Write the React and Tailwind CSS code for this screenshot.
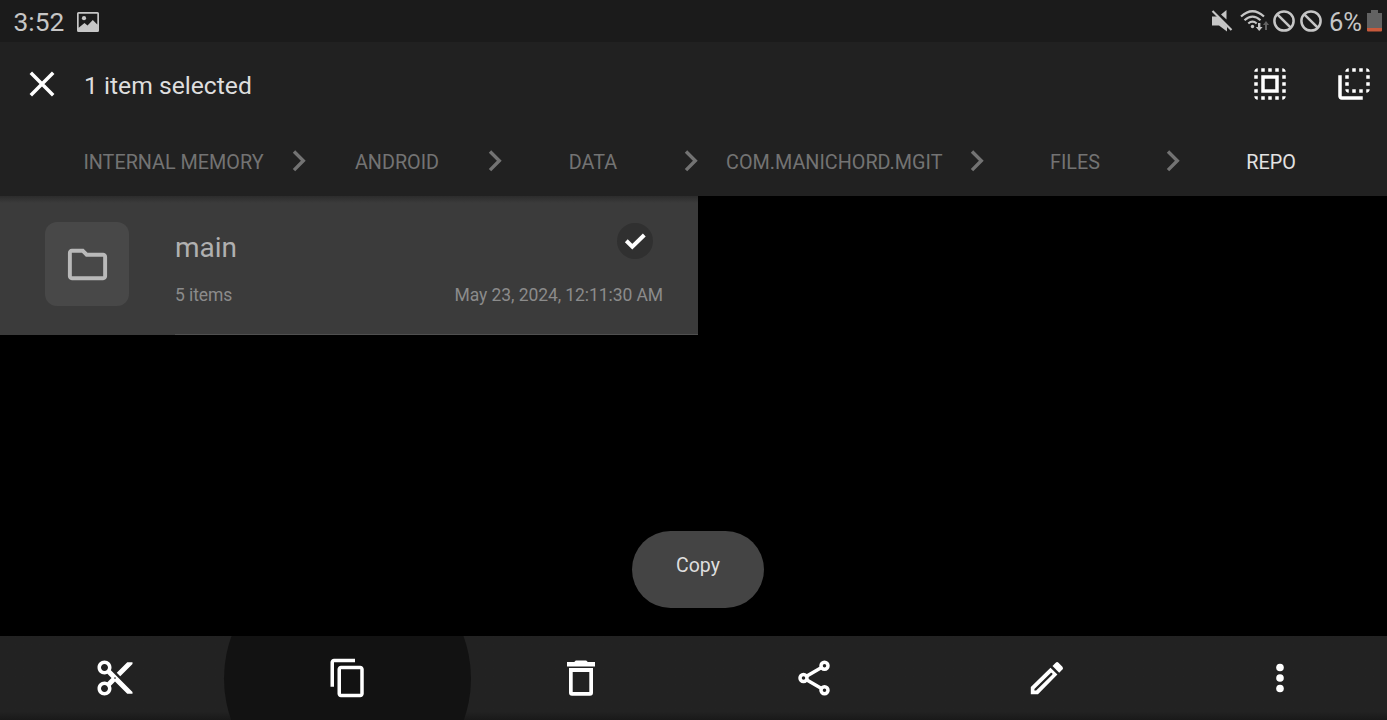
const F = "font-['Roboto',sans-serif]";

function Icon({ className = 'size-[42px]', children, viewBox = '0 0 24 24' }) {
  return (
    <svg viewBox={viewBox} fill="currentColor" className={`block shrink-0 ${className}`}>
      {children}
    </svg>
  );
}

const SelectAll = () => (
  <Icon>
    <path d="M3 5h2V3c-1.100 0-2 .9-2 2zm0 8h2v-2H3v2zm4 8h2v-2H7v2zM3 9h2V7H3v2zm10-6h-2v2h2V3zm6 0v2h2c0-1.100-.9-2-2-2zM5 21v-2H3c0 1.100.9 2 2 2zm-2-4h2v-2H3v2zM9 3H7v2h2V3zm2 18h2v-2h-2v2zm8-8h2v-2h-2v2zm0 8c1.100 0 2-.9 2-2h-2v2zm0-12h2V7h-2v2zm0 8h2v-2h-2v2zm-4 4h2v-2h-2v2zm0-16h2V3h-2v2zM7 17h10V7H7v10zm2-8h6v6H9V9z" />
  </Icon>
);

const FlipBack = () => (
  <Icon>
    <path d="M9 7H7v2h2V7zm0 4H7v2h2v-2zm0-8c-1.110 0-2 .9-2 2h2V3zm4 12h-2v2h2v-2zm6-12v2h2c0-1.100-.9-2-2-2zm-6 0h-2v2h2V3zM9 17v-2H7c0 1.100.89 2 2 2zm10-4h2v-2h-2v2zm0-4h2V7h-2v2zm0 8c1.100 0 2-.9 2-2h-2v2zM5 7H3v12c0 1.100.89 2 2 2h12v-2H5V7zm10-2h2V3h-2v2zm0 12h2v-2h-2v2z" />
  </Icon>
);

const Cut = () => (
  <Icon>
    <path d="M9.640 7.640c.23-.5.36-1.050.36-1.640 0-2.210-1.790-4-4-4S2 3.790 2 6s1.790 4 4 4c.59 0 1.140-.13 1.640-.36L10 12l-2.360 2.360C7.140 14.130 6.590 14 6 14c-2.210 0-4 1.790-4 4s1.790 4 4 4 4-1.790 4-4c0-.59-.13-1.140-.36-1.640L12 14l7 7h3v-1L9.640 7.640zM6 8c-1.100 0-2-.89-2-2s.9-2 2-2 2 .89 2 2-.9 2-2 2zm0 12c-1.100 0-2-.89-2-2s.9-2 2-2 2 .89 2 2-.9 2-2 2zm6-7.500c-.28 0-.5-.22-.5-.5s.22-.5.5-.5.5.22.5.5-.22.5-.5.5zM19 3l-6 6 2 2 7-7V3z" />
  </Icon>
);

const CopyIcon = () => (
  <Icon>
    <path d="M16 1H4c-1.100 0-2 .9-2 2v14h2V3h12V1zm3 4H8c-1.100 0-2 .9-2 2v14c0 1.100.9 2 2 2h11c1.100 0 2-.9 2-2V7c0-1.100-.9-2-2-2zm0 16H8V7h11v14z" />
  </Icon>
);

const Trash = () => (
  <Icon viewBox="0 0 42 42">
    <path d="M7 4.900h7.200l1.600-1.400h10.400l1.600 1.400H35v4.600H7z" />
    <path fillRule="evenodd" d="M9 11h24v24.700a3 3 0 0 1-3 3H12a3 3 0 0 1-3-3zM12.700 14.900V35h16.600V14.900z" />
  </Icon>
);

const Share = () => (
  <Icon>
    <g fill="none" stroke="currentColor" strokeWidth="2">
      <path d="M7.700 11l8.600-5M7.700 13l8.600 5" />
      <circle cx="18" cy="5" r="2" />
      <circle cx="6" cy="12" r="2" />
      <circle cx="18" cy="19" r="2" />
    </g>
  </Icon>
);

const Pencil = () => (
  <Icon viewBox="0 0 42 42">
    <path d="M26.500 9l3.200-3.200a2 2 0 0 1 2.800 0l3.900 3.900a2 2 0 0 1 0 2.800l-3.200 3.200z" />
    <path fillRule="evenodd" d="M4.800 30.100L24.500 10.700l6.900 6.700L12 37.200H4.800zM8.400 31.900v1.500h1.700L26.200 17.800c1-1.100-.6-2.600-1.700-1.600z" />
  </Icon>
);

const More = () => (
  <Icon viewBox="0 0 42 42">
    <circle cx="21" cy="10.500" r="3.800" />
    <circle cx="21" cy="21" r="3.800" />
    <circle cx="21" cy="31.500" r="3.800" />
  </Icon>
);

const Blocked = () => (
  <Icon viewBox="0 0 22 22" className="size-[22px]">
    <g fill="none" stroke="currentColor" strokeWidth="2.500">
      <circle cx="11" cy="11" r="9.600" />
      <path d="M4.300 4.300l13.400 13.400" />
    </g>
  </Icon>
);

function StatusBar() {
  return (
    <div className="flex h-[42px] shrink-0 items-center justify-between bg-[#1b1b1b] pl-[13px] pr-[5px] text-[#c6c6c6]">
      <div className="flex items-center gap-[12px]">
        <span className="w-[52px] whitespace-nowrap pl-[0.500px] pt-[2px] text-[26.300px] leading-[30px]">3:52</span>
        <Icon viewBox="0 0 22 20" className="mt-[2px] h-[20px] w-[22px]">
          <path fillRule="evenodd" d="M1.500 0h19A1.500 1.500 0 0 1 22 1.500v17a1.500 1.500 0 0 1-1.500 1.500h-19A1.500 1.500 0 0 1 0 18.500v-17A1.500 1.500 0 0 1 1.500 0zM1.700 1.700v14L7.500 11l3 2.500L15.800 8l4.500 4.500V1.700z" />
          <circle cx="7" cy="6.200" r="2.100" />
        </Icon>
      </div>
      <div className="flex items-center">
        <Icon viewBox="0 0 22 22" className="mr-[7px] size-[22px]">
          <path d="M1 6.500h5.500L16 16.500V21.500L8 15.500H1z" />
          <path d="M10 4.500L15.500 0v9.500z" />
          <path d="M1.500 1L20.500 20" stroke="currentColor" strokeWidth="2.200" />
        </Icon>
        <Icon viewBox="0 0 30 22" className="mr-[3px] h-[22px] w-[30px]">
          <g fill="none" stroke="currentColor" strokeWidth="2.200">
            <path d="M1 6.500Q12.500-4 24 6.500" />
            <path d="M4.500 10.200q8-7.200 16 0" />
            <path d="M8.300 13.500q4.200-3.600 8.400 0" />
          </g>
          <circle cx="12.500" cy="16.500" r="1.700" />
          <path d="M18 13h2.400v4h2.200l-3.400 4-3.400-4H18z" />
          <path d="M25 20v-5h-2l3-4 3 4h-2v5z" fill="#626262" />
        </Icon>
        <Blocked />
        <span className="w-[5px]" />
        <Blocked />
        <span className="ml-[7px] w-[36px] whitespace-nowrap pt-[2px] text-[25.500px] leading-[30px]">6%</span>
        <Icon viewBox="0 0 15 22" className="ml-[2px] h-[22px] w-[15px]">
          <path d="M4 0h7v3h4v15H0V3h4z" fill="#626262" />
          <path d="M0 18h15v2.500q0 1-1 1H1q-1 0-1-1z" fill="#c85a3c" />
        </Icon>
      </div>
    </div>
  );
}

const crumbs = [
  { name: 'INTERNAL MEMORY', box: 'w-[181px]' },
  { name: 'ANDROID', box: 'w-[126px]' },
  { name: 'DATA', box: 'w-[126px]' },
  { name: 'COM.MANICHORD.MGIT', box: 'w-[216px]' },
  { name: 'FILES', box: 'w-[126px]' },
  { name: 'REPO', box: 'w-[126px]' },
];

function Breadcrumbs() {
  return (
    <div className="flex h-[70px] shrink-0 items-center pl-[83px] text-[19.800px] text-[#737373]">
      {crumbs.map((c, i) => (
        <div key={c.name} className="flex h-[42px] shrink-0 items-center">
          <span className={`${c.box} whitespace-nowrap pt-[3px] text-center leading-[24px] ${i === 5 ? 'text-[#e2e2e2]' : ''}`}>{c.name}</span>
          {i < 5 && (
            <Icon viewBox="0 0 70 42" className="h-[42px] w-[70px]">
              <path d="M30 11.500l9.300 9.300-9.300 9.300" fill="none" stroke="currentColor" strokeWidth="3.400" />
            </Icon>
          )}
        </div>
      ))}
    </div>
  );
}

const actions = [
  { label: 'Cut', Glyph: Cut },
  { label: 'Copy', Glyph: CopyIcon },
  { label: 'Delete', Glyph: Trash },
  { label: 'Share', Glyph: Share },
  { label: 'Rename', Glyph: Pencil },
  { label: 'More', Glyph: More },
];

export default function App() {
  return (
    <div className={`${F} flex h-[720px] w-[1387px] flex-col overflow-hidden bg-black`}>
      <StatusBar />
      <header className="flex h-[154px] shrink-0 flex-col bg-[#212121]">
        <div className="flex h-[84px] items-center pl-[21px] pr-[12px] text-white">
          <Icon>
            <path d="M5.600 5.600l12.800 12.800M18.400 5.600L5.600 18.400" stroke="currentColor" strokeWidth="2" />
          </Icon>
          <h1 className="ml-[21px] pt-[4px] text-[24.700px] font-normal leading-[30px] text-[#dedede]">1 item selected</h1>
          <div className="ml-auto flex gap-[42px]">
            <SelectAll />
            <FlipBack />
          </div>
        </div>
        <Breadcrumbs />
      </header>

      <main className="flex min-h-0 flex-1 flex-col justify-between">
        <div className="flex h-[139px] w-[698px] bg-[#3b3b3b] bg-linear-to-b from-[#2c2c2c] to-[#3b3b3b] to-[7px] pl-[45px]">
          <div className="mt-[26px] flex size-[84px] shrink-0 items-center justify-center rounded-[12px] bg-[#484848] pt-[1px] text-[#b9b9b9]">
            <Icon className="size-[47px]">
              <path d="M9.170 6l2 2H20v10H4V6h5.170M10 4H4c-1.100 0-1.990.9-1.990 2L2 18c0 1.100.9 2 2 2h16c1.100 0 2-.9 2-2V8c0-1.100-.9-2-2-2h-8l-2-2z" />
            </Icon>
          </div>
          <div className="ml-[46px] flex flex-1 flex-col border-b border-[#505050] pr-[35px]">
            <div className="flex justify-between">
              <span className="mt-[36px] text-[28px] leading-[32px] text-[#b0b0b0]">main</span>
              <span className="mr-[10px] mt-[27px] flex size-[36px] items-center justify-center rounded-full bg-[#303030] text-white">
                <Icon viewBox="0 0 36 36" className="size-[36px]">
                  <path d="M9.300 17.800l6 5.900L27.300 12" fill="none" stroke="currentColor" strokeWidth="4" />
                </Icon>
              </span>
            </div>
            <div className="mt-[19px] flex justify-between text-[17.500px] leading-[24px] tracking-[-0.080px] text-[#8b8b8b]">
              <span>5 items</span>
              <span>May 23, 2024, 12:11:30 AM</span>
            </div>
          </div>
        </div>
        <div className="mb-[28px] ml-[632px] flex h-[77px] w-[132px] justify-center rounded-full bg-[#444] pt-[23px] text-[19.500px] leading-[24px] text-[#dedede]">
          Copy
        </div>
      </main>

      <nav className="-ml-[2px] flex h-[84px] w-[1399px] shrink-0 overflow-hidden bg-[#222] bg-linear-to-b from-[#222] from-90% to-[#191919] text-white">
        {actions.map(({ label, Glyph }) => (
          <button key={label} aria-label={label} className="flex w-[233px] shrink-0 items-center justify-center">
            {label === 'Copy' ? (
              <span className="flex size-[247px] shrink-0 items-center justify-center rounded-full bg-[#121212]">
                <Glyph />
              </span>
            ) : (
              <Glyph />
            )}
          </button>
        ))}
      </nav>
    </div>
  );
}
